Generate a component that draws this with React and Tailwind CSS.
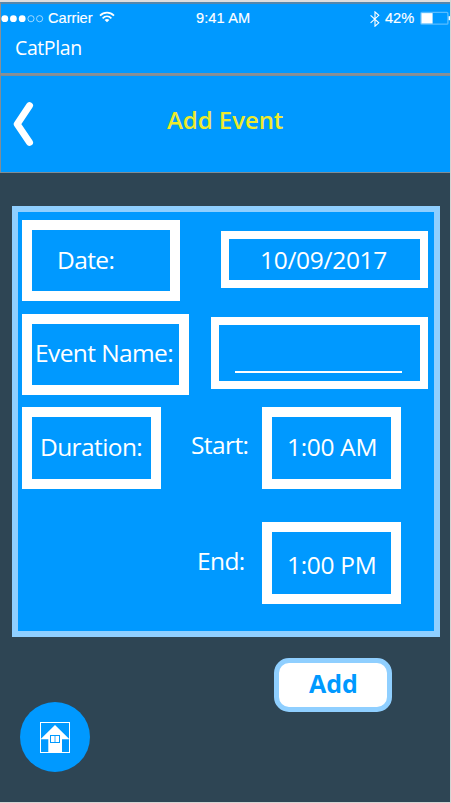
import React from "react";

const text = "font-['Open_Sans','Noto_Sans',sans-serif] text-[24.5px] leading-[32px] whitespace-nowrap text-white";
const label = `${text} tracking-[-0.6px]`;
const value = `${text} tracking-[-0.3px]`;

function Box({ className = "", children }) {
  return <div className={`flex shrink-0 border-white ${className}`}>{children}</div>;
}

function StatusBar() {
  return (
    <div className="flex h-[29px] items-start pt-[5px] font-['Liberation_Sans',Arial,sans-serif] text-[14.6px] leading-[18px] text-white">
      <svg className="mt-[5px] h-[9px] w-[43px] shrink-0" viewBox="0 0 43 9">
        <g fill="#fff">
          <circle cx="3.8" cy="4.7" r="3.4" />
          <circle cx="12.4" cy="4.7" r="3.4" />
          <circle cx="21.2" cy="4.7" r="3.4" />
        </g>
        <g fill="none" stroke="#fff" strokeWidth="0.6">
          <circle cx="30" cy="4.7" r="3.1" />
          <circle cx="38.6" cy="4.7" r="3.1" />
        </g>
      </svg>
      <span className="ml-[4px] w-[46px] whitespace-nowrap [-webkit-text-stroke:0.15px_white]">Carrier</span>
      <svg className="ml-[5px] mt-[2px] h-[12px] w-[16px] shrink-0" viewBox="0 0 16 12">
        <g fill="none" stroke="#fff" strokeWidth="1.7">
          <path d="M1 4.6C5 .5 11 .5 15 4.6" />
          <path d="M3.6 7.3C6.2 4.8 9.8 4.8 12.4 7.3" />
        </g>
        <path d="M8 11.3 5.6 9C7 7.7 9 7.7 10.4 9Z" fill="#fff" />
      </svg>
      <span className="ml-[81px] w-[58px] whitespace-nowrap tracking-[0.1px] [-webkit-text-stroke:0.15px_white]">9:41 AM</span>
      <svg className="ml-[116px] mt-[2px] h-[16px] w-[10px] shrink-0" viewBox="0 0 10 16">
        <path d="M.6 4.3 8.8 11.8 5 15.2V.9L8.8 4.3.6 11.8" fill="none" stroke="#fff" strokeWidth="1.1" />
      </svg>
      <span className="ml-[5px] w-[30px] whitespace-nowrap [-webkit-text-stroke:0.15px_white]">42%</span>
      <svg className="ml-[5px] mt-[2px] h-[14px] w-[30px] shrink-0" viewBox="0 0 30 14">
        <rect x="0.9" y="1.4" width="27" height="11.8" rx="1" fill="none" stroke="#59bdff" strokeWidth="1.3" />
        <rect x="1.4" y="2.1" width="11.2" height="10.4" fill="#fff" />
        <rect x="28.6" y="5.2" width="1.4" height="4" fill="#fff" />
      </svg>
    </div>
  );
}

export default function App() {
  return (
    <div className="h-[803px] w-[451px] overflow-hidden border-r border-b border-[#d4d4d4] bg-[#2e4554]">
      <div className="h-[2px] bg-[#dedede]" />
      <header className="flex h-[73px] flex-col border-t-2 border-b-2 border-l border-[#8a8f94] border-t-[#5387ad] bg-[#0099ff]">
        <StatusBar />
        <div className="mt-px pl-[14px] font-['Open_Sans','Noto_Sans',sans-serif] text-[19.5px] leading-[28px] tracking-[-0.4px] text-white">
          CatPlan
        </div>
      </header>
      <div className="flex h-[98px] border-b border-l border-[#808d96] border-t bg-[#0099ff]">
        <svg className="ml-[11px] mt-[25px] h-[46px] w-[22px] shrink-0" viewBox="0 0 22 46">
          <path d="M17.5 4.6 5.2 23.1 17.5 41.4" fill="none" stroke="#fff" strokeWidth="7" strokeLinecap="round" strokeLinejoin="round" />
        </svg>
        <h1 className="ml-[133px] mt-[27px] font-['Open_Sans','Noto_Sans',sans-serif] text-[24px] leading-[34px] font-semibold tracking-[-0.05px] whitespace-nowrap text-[#eeea2c]">
          Add Event
        </h1>
      </div>

      <main className="mt-[33px] ml-[12px] h-[431px] w-[428px] border-6 border-[#8fcfff] bg-[#0099ff] pt-[8px] pl-[4px]">
        <div className="flex h-[94px] items-start">
          <Box className="h-[81px] w-[158px] border-10 pt-[14px] pl-[25px]">
            <span className={label}>Date:</span>
          </Box>
          <Box className="mt-[11px] ml-[41px] h-[57px] w-[207px] border-8 pt-[5px] pl-[31px]">
            <span className={value}>10/09/2017</span>
          </Box>
        </div>
        <div className="flex h-[93px] items-start">
          <Box className="h-[81px] w-[167px] border-10 pt-[13px] pl-[3px]">
            <span className={label}>Event Name:</span>
          </Box>
          <Box className="mt-[3px] ml-[22px] h-[72px] w-[217px] border-8 pt-[46px] pl-[16px]">
            <div className="h-[2px] w-[167px] bg-white" />
          </Box>
        </div>
        <div className="flex h-[115px] items-start">
          <Box className="h-[82px] w-[139px] border-10 pt-[14px] pl-[8px]">
            <span className={label}>Duration:</span>
          </Box>
          <span className={`${label} mt-[22px] ml-[30px] w-[71px]`}>Start:</span>
          <Box className="h-[82px] w-[139px] border-10 pt-[14px] pl-[15px]">
            <span className={value}>1:00 AM</span>
          </Box>
        </div>
        <div className="flex items-start">
          <span className={`${label} mt-[23px] ml-[175px] w-[65px]`}>End:</span>
          <Box className="h-[82px] w-[139px] border-10 pt-[17px] pl-[15px]">
            <span className={value}>1:00 PM</span>
          </Box>
        </div>
      </main>

      <footer className="flex items-start">
        <button className="mt-[65px] ml-[20px] flex size-[70px] items-center justify-center rounded-full bg-[#0099ff]">
          <svg className="size-[32px]" viewBox="0 0 32 32">
            <rect x="1.5" y="1.5" width="29" height="30" fill="none" stroke="#fff" strokeWidth="1" />
            <path d="M16 4 30.5 18.2H23V31H9.3V18.2H1.5Z" fill="#fff" />
            <rect x="11.5" y="14.5" width="9" height="7" fill="#fff" stroke="#0099ff" strokeWidth="1" />
            <path d="M16 15V21" stroke="#0099ff" strokeWidth="0.8" />
          </svg>
        </button>
        <button className="mt-[21px] ml-[184px] flex h-[54px] w-[118px] rounded-[15px] border-5 border-[#8fcfff] bg-white pt-[4px] pl-[30px] font-['Open_Sans','Noto_Sans',sans-serif] text-[25px] leading-[32px] font-bold text-[#0099ff]">
          Add
        </button>
      </footer>
    </div>
  );
}
